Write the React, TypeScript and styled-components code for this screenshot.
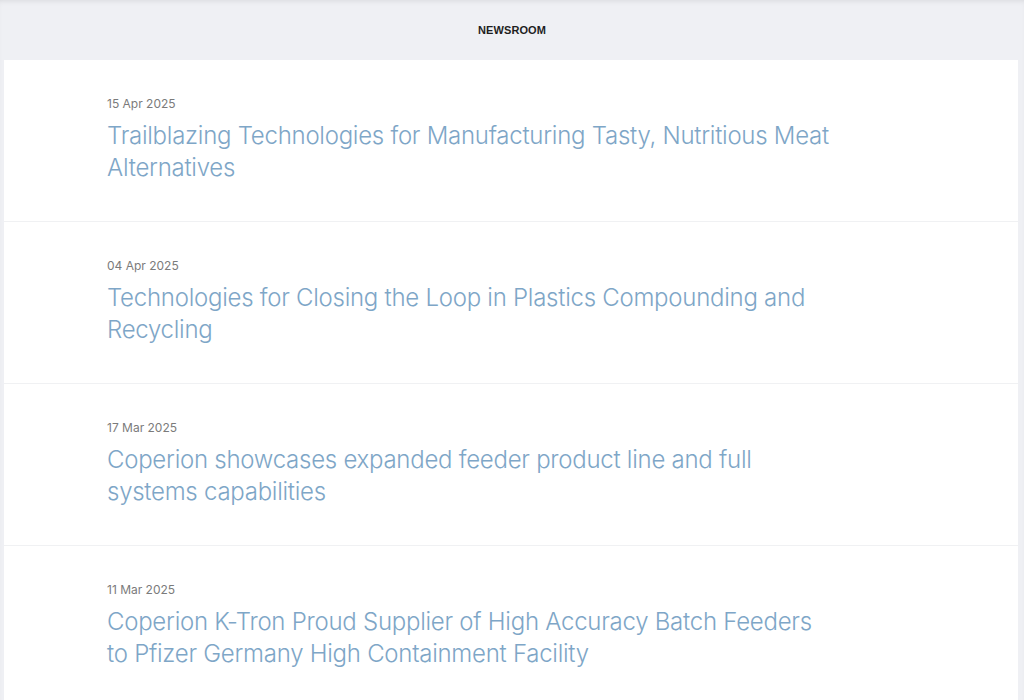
import React from "react";
import styled, { createGlobalStyle } from "styled-components";

const Global = createGlobalStyle`
  html, body { margin: 0; padding: 0; background: #eff0f4; }
  body { font-family: Inter, "Liberation Sans", Arial, sans-serif; -webkit-font-smoothing: antialiased; }
  * { box-sizing: border-box; }
`;

const Page = styled.div`
  min-height: 700px;
  display: flex;
  flex-direction: column;
  box-shadow: inset 0 4px 6px -4px rgba(0,0,0,0.12);
`;

const Header = styled.header`
  height: 60px;
  display: flex;
  align-items: center;
  justify-content: center;
`;

const HeaderTitle = styled.h1`
  margin: 0;
  font-family: "Liberation Sans", Arial, sans-serif;
  font-size: 11px;
  font-weight: 700;
  letter-spacing: 0.1px;
  color: #1e1e1e;
`;

const Panel = styled.main`
  flex: 1;
  margin: 0 6px 0 4px;
  background: #ffffff;
`;

const Item = styled.article`
  padding: 36px 103px 37px;
  border-bottom: 1px solid #f0f1f3;
`;

const DateLine = styled.div`
  font-size: 12px;
  line-height: 16px;
  color: #7b7b7b;
  margin-bottom: 8px;
`;

const Title = styled.a`
  display: block;
  max-width: 726px;
  font-size: 24px;
  font-weight: 300;
  line-height: 32px;
  letter-spacing: -0.26px;
  color: #7ea6c7;
  text-decoration: none;
`;

const news = [
  { date: "15 Apr 2025", title: "Trailblazing Technologies for Manufacturing Tasty, Nutritious Meat Alternatives" },
  { date: "04 Apr 2025", title: "Technologies for Closing the Loop in Plastics Compounding and Recycling" },
  { date: "17 Mar 2025", title: "Coperion showcases expanded feeder product line and full systems capabilities" },
  { date: "11 Mar 2025", title: "Coperion K-Tron Proud Supplier of High Accuracy Batch Feeders to Pfizer Germany High Containment Facility" },
];

export default function App() {
  return (
    <>
      <Global />
      <Page>
        <Header>
          <HeaderTitle>NEWSROOM</HeaderTitle>
        </Header>
        <Panel>
          {news.map((n) => (
            <Item key={n.date}>
              <DateLine>{n.date}</DateLine>
              <Title href="#">{n.title}</Title>
            </Item>
          ))}
        </Panel>
      </Page>
    </>
  );
}
